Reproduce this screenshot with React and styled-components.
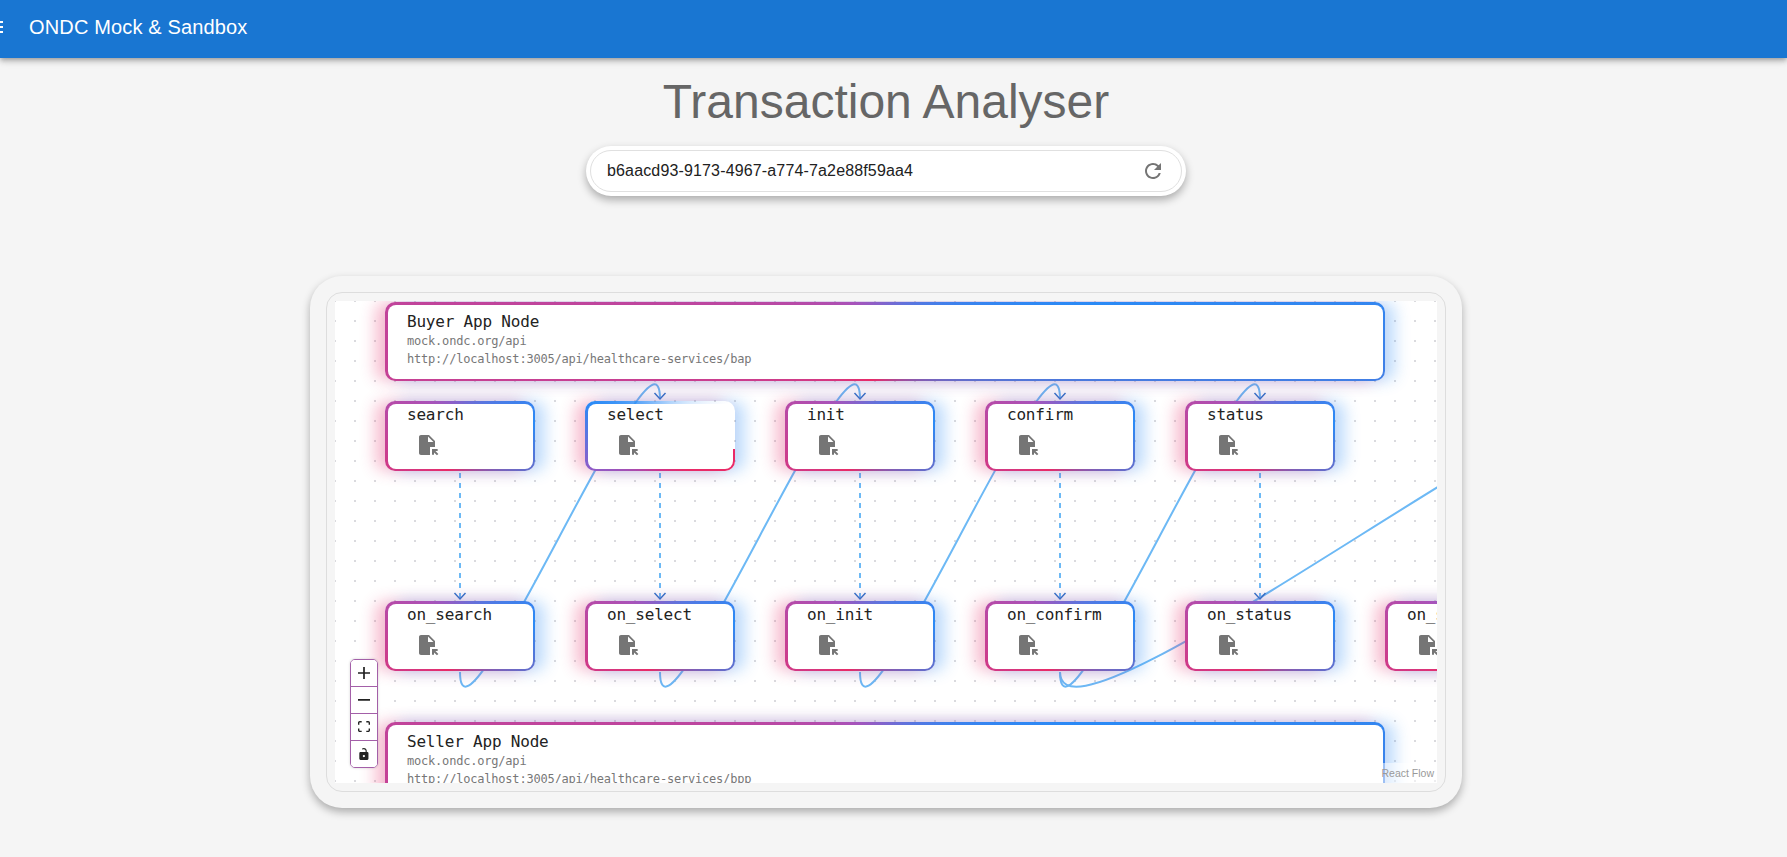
import React from 'react';
import styled, { createGlobalStyle } from 'styled-components';
import { MdMenu, MdRefresh, MdFileOpen } from 'react-icons/md';

const GlobalStyle = createGlobalStyle`
  html, body {
    margin: 0;
    height: 100%;
    overflow: hidden;
    background: #f5f5f5;
    font-family: "Liberation Sans", Arial, sans-serif;
  }
`;

const Page = styled.div`
  min-height: 857px;
  display: flex;
  flex-direction: column;
`;

const AppBar = styled.header`
  height: 58px;
  box-sizing: border-box;
  padding-bottom: 5px;
  flex: none;
  display: flex;
  align-items: center;
  color: #fff;
  background: #1976d2;
  box-shadow: 0 2px 4px -1px rgba(0, 0, 0, 0.2), 0 4px 5px 0 rgba(0, 0, 0, 0.14),
    0 1px 10px 0 rgba(0, 0, 0, 0.12);
`;

const MenuButton = styled.span`
  display: flex;
  margin-left: -18px;
  margin-right: 23px;
  font-size: 24px;
`;

const AppTitle = styled.div`
  font-size: 20px;
  line-height: 24px;
  letter-spacing: 0.15px;
`;

const Main = styled.main`
  display: flex;
  flex-direction: column;
  align-items: center;
  padding-right: 15px;
`;

const Heading = styled.h1`
  margin: 16px 0 17px;
  font-size: 48px;
  font-weight: 400;
  line-height: 55px;
  color: #666;
`;

const SearchPill = styled.div`
  width: 600px;
  height: 50px;
  box-sizing: border-box;
  padding: 4px;
  border-radius: 25px;
  background: #fff;
  box-shadow: 0 4px 8px rgba(0, 0, 0, 0.3);
`;

const SearchInner = styled.div`
  height: 100%;
  box-sizing: border-box;
  display: flex;
  align-items: center;
  justify-content: space-between;
  padding: 0 16px 0 16px;
  border: 1px solid #e0e0e0;
  border-radius: 21px;
  font-size: 16px;
  letter-spacing: 0.15px;
  color: #212121;
`;

const RefreshButton = styled.span`
  display: flex;
  font-size: 24px;
  color: #757575;
`;

const Card = styled.section`
  width: 1152px;
  height: 532px;
  box-sizing: border-box;
  margin-top: 80px;
  padding: 16px;
  border-radius: 32px;
  background: #f5f5f5;
  box-shadow: 0 4px 8px rgba(0, 0, 0, 0.3);
`;

const Frame = styled.div`
  height: 100%;
  box-sizing: border-box;
  padding: 8px;
  border: 1px solid #ddd;
  border-radius: 16px;
`;

const Flow = styled.div`
  position: relative;
  height: 482px;
  overflow: hidden;
  background-color: #fff;
  background-image: radial-gradient(circle, #dadade 0.9px, transparent 1.1px);
  background-size: 20px 20px;
  background-position: -10px -10px;
`;

const Edges = styled.svg`
  position: absolute;
  inset: 0;
  width: 100%;
  height: 100%;
`;

const EdgePath = styled.path`
  fill: none;
  stroke: #6db9f5;
  stroke-width: 2;
  stroke-dasharray: ${({ $dashed }) => ($dashed ? '5 5' : 'none')};
`;

const ArrowHead = styled.polyline`
  fill: none;
  stroke: #2f72c9;
  stroke-width: 1.4;
`;

const Node = styled.div`
  position: absolute;
  left: ${({ $x }) => $x}px;
  top: ${({ $y }) => $y}px;
  width: ${({ $wide }) => ($wide ? 1000 : 150)}px;
  height: ${({ $wide }) => ($wide ? 79 : 70)}px;
  display: flex;
  border-radius: 10px;
  box-shadow: 10px 0 15px rgba(42, 138, 246, 0.3), -10px 0 15px rgba(233, 42, 103, 0.3);
  font-family: "DejaVu Sans Mono", monospace;
  letter-spacing: -0.2px;
`;

const Ring = styled.div`
  position: relative;
  flex: 1;
  display: flex;
  box-sizing: border-box;
  padding: 2.5px;
  overflow: hidden;
  border-radius: 10px;

  &::before {
    content: '';
    position: absolute;
    left: 50%;
    top: 50%;
    width: 141.42%;
    padding-bottom: 141.42%;
    border-radius: 100%;
    transform: translate(-50%, -50%);
    background: ${({ $active }) =>
      $active
        ? 'conic-gradient(from 100deg at 50% 50%, #e92a67 0deg, #e92a67 40deg, #d0338a 80deg, #8f5cc8 145deg, #2a8af6 195deg, rgba(42, 138, 246, 0.5) 260deg, rgba(42, 138, 246, 0) 325deg, rgba(42, 138, 246, 0) 360deg)'
        : 'conic-gradient(from -160deg at 50% 50%, #e92a67 0deg, #a853ba 120deg, #2a8af6 240deg, #e92a67 360deg)'};
  }
`;

const Body = styled.div`
  position: relative;
  flex: 1;
  box-sizing: border-box;
  padding: ${({ $wide }) => ($wide ? '7.5px' : '1.5px')} 19.5px 0;
  border-radius: 8px;
  background: #fff;
`;

const NodeName = styled.div`
  font-size: 16px;
  line-height: ${({ $wide }) => ($wide ? 19.5 : 19)}px;
  color: #222;
  white-space: nowrap;
`;

const NodeSub = styled.div`
  font-size: 12px;
  line-height: 18.5px;
  color: #777;
  white-space: nowrap;
`;

const FileButton = styled.span`
  display: block;
  width: 24px;
  height: 24px;
  margin-top: 1px;
  padding: 8px;
  font-size: 24px;
  color: #757575;

  svg {
    display: block;
  }
`;

const Controls = styled.div`
  position: absolute;
  left: 15px;
  bottom: 15px;
  width: 26px;
  display: flex;
  flex-direction: column;
  border: 1px solid #a35fa8;
  border-radius: 5px;
  background: #fff;
  box-shadow: 0 0 2px 1px rgba(0, 0, 0, 0.08);
  overflow: hidden;
`;

const ControlButton = styled.button`
  width: 26px;
  height: 27px;
  box-sizing: border-box;
  padding: 0;
  display: flex;
  align-items: center;
  justify-content: center;
  border: none;
  border-bottom: 1px solid #a35fa8;
  background: #fff;
  color: #222;

  &:last-child {
    height: 26px;
    border-bottom: none;
  }

  svg {
    width: 12px;
    max-height: 12px;
    fill: currentColor;
  }
`;

const Attribution = styled.div`
  position: absolute;
  right: 0;
  bottom: 0;
  padding: 4px 3px 4px 0;
  font-size: 10.5px;
  line-height: 12px;
  color: #999;
  background: rgba(255, 255, 255, 0.5);
`;

const requests = ['search', 'select', 'init', 'confirm', 'status'];
const responses = ['on_search', 'on_select', 'on_init', 'on_confirm', 'on_status', 'on_support'];

const columnCenter = (i) => 125 + 200 * i;
const TOP_TARGET = 98;
const BOTTOM_SOURCE = 371;

// same curve react flow draws between a bottom handle and a top handle
const bezier = (sx, tx) => {
  const offset = 0.25 * 25 * Math.sqrt(BOTTOM_SOURCE - TOP_TARGET);
  return `M${sx},${BOTTOM_SOURCE} C${sx},${BOTTOM_SOURCE + offset} ${tx},${TOP_TARGET - offset} ${tx},${TOP_TARGET}`;
};

const chevron = (x, y) => `${x - 5.5},${y - 6} ${x},${y} ${x + 5.5},${y - 6}`;

const curved = [
  [0, 1],
  [1, 2],
  [2, 3],
  [3, 4],
  [3, 6],
];

const FlowEdges = () => (
  <Edges>
    {curved.map(([from, to]) => (
      <EdgePath key={`${from}-${to}`} d={bezier(columnCenter(from), columnCenter(to))} />
    ))}
    {requests.map((name, i) => (
      <EdgePath key={name} $dashed d={`M${columnCenter(i)},172 L${columnCenter(i)},298`} />
    ))}
    {requests.slice(1).map((name, i) => (
      <ArrowHead key={name} points={chevron(columnCenter(i + 1), TOP_TARGET)} />
    ))}
    {requests.map((name, i) => (
      <ArrowHead key={name} points={chevron(columnCenter(i), 298)} />
    ))}
  </Edges>
);

const ActionNode = ({ name, x, y, active }) => (
  <Node $x={x} $y={y}>
    <Ring $active={active}>
      <Body>
        <NodeName>{name}</NodeName>
        <FileButton>
          <MdFileOpen />
        </FileButton>
      </Body>
    </Ring>
  </Node>
);

const AppNode = ({ name, y, path }) => (
  <Node $x={50} $y={y} $wide>
    <Ring>
      <Body $wide>
        <NodeName $wide>{name}</NodeName>
        <NodeSub>mock.ondc.org/api</NodeSub>
        <NodeSub>{`http://localhost:3005/api/healthcare-services/${path}`}</NodeSub>
      </Body>
    </Ring>
  </Node>
);

const FlowControls = () => (
  <Controls>
    <ControlButton aria-label="zoom in">
      <svg viewBox="0 0 32 32">
        <path d="M32 18.286H18.286V32h-4.572V18.286H0v-4.572h13.714V0h4.572v13.714H32v4.572z" />
      </svg>
    </ControlButton>
    <ControlButton aria-label="zoom out">
      <svg viewBox="0 0 32 5">
        <path d="M0 0h32v4.571H0z" />
      </svg>
    </ControlButton>
    <ControlButton aria-label="fit view">
      <svg viewBox="0 0 32 30">
        <path d="M3.692 4.63c0-.53.4-.938.939-.938h5.215V0H4.708C2.13 0 0 2.054 0 4.63v5.216h3.692V4.631zM27.354 0h-5.2v3.692h5.17c.53 0 .984.4.984.939v5.215H32V4.631A4.624 4.624 0 0027.354 0zm.954 24.83c0 .532-.4.94-.939.94h-5.215v3.768h5.215c2.577 0 4.631-2.13 4.631-4.707v-5.139h-3.692v5.139zm-23.677.94c-.531 0-.939-.4-.939-.94v-5.138H0v5.139c0 2.577 2.13 4.707 4.708 4.707h5.138V25.77H4.631z" />
      </svg>
    </ControlButton>
    <ControlButton aria-label="toggle interactivity">
      <svg viewBox="0 0 25 32">
        <path d="M21.333 10.667H19.81V7.619C19.81 3.429 16.38 0 12.19 0c-1.969 0-3.831.766-5.24 2.158l2.169 2.18c.82-.82 1.897-1.271 3.071-1.271 2.514 0 4.572 2.058 4.572 4.572v3.028H3.048A3.056 3.056 0 000 13.714v15.238A3.056 3.056 0 003.048 32h18.285a3.056 3.056 0 003.048-3.048V13.714a3.056 3.056 0 00-3.048-3.047zM12.19 24.533a3.056 3.056 0 01-3.047-3.047 3.056 3.056 0 013.047-3.048 3.056 3.056 0 013.048 3.048 3.056 3.056 0 01-3.048 3.047z" />
      </svg>
    </ControlButton>
  </Controls>
);

const App = () => (
  <Page>
    <GlobalStyle />
    <AppBar>
      <MenuButton>
        <MdMenu />
      </MenuButton>
      <AppTitle>ONDC Mock &amp; Sandbox</AppTitle>
    </AppBar>
    <Main>
      <Heading>Transaction Analyser</Heading>
      <SearchPill>
        <SearchInner>
          <span>b6aacd93-9173-4967-a774-7a2e88f59aa4</span>
          <RefreshButton>
            <MdRefresh />
          </RefreshButton>
        </SearchInner>
      </SearchPill>
      <Card>
        <Frame>
          <Flow>
            <FlowEdges />
            <AppNode name="Buyer App Node" y={1} path="bap" />
            {requests.map((name, i) => (
              <ActionNode key={name} name={name} x={50 + 200 * i} y={100} active={name === 'select'} />
            ))}
            {responses.map((name, i) => (
              <ActionNode key={name} name={name} x={50 + 200 * i} y={300} />
            ))}
            <AppNode name="Seller App Node" y={421} path="bpp" />
            <FlowControls />
            <Attribution>React Flow</Attribution>
          </Flow>
        </Frame>
      </Card>
    </Main>
  </Page>
);

export default App;
